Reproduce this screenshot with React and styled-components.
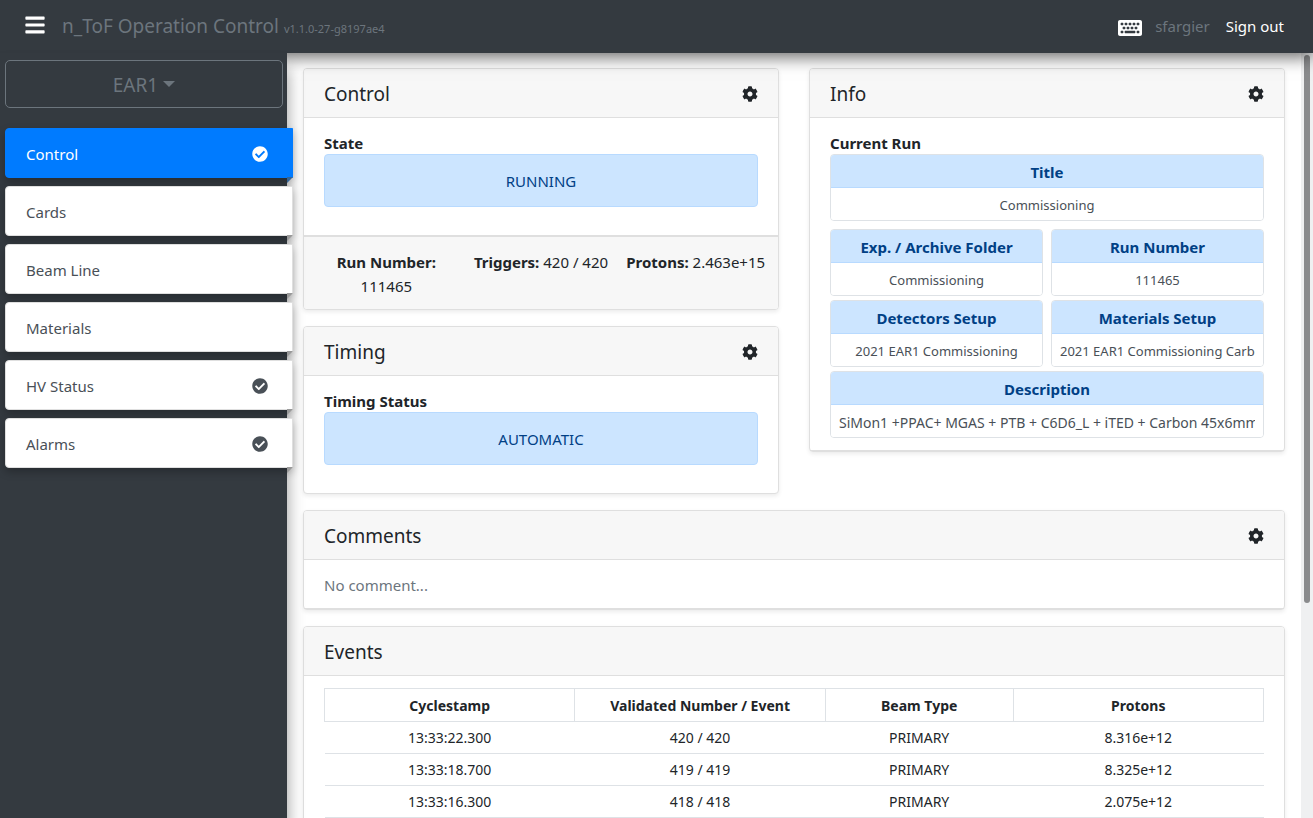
import styled, { createGlobalStyle, css } from "styled-components";
import { FaBars, FaCheckCircle, FaCog, FaKeyboard } from "react-icons/fa";

const GlobalStyle = createGlobalStyle`
  *, *::before, *::after {
    box-sizing: border-box;
  }
  body {
    margin: 0;
    font-family: "Noto Sans", sans-serif;
    font-size: 15px;
    line-height: 24px;
    color: #212529;
    background: #fff;
  }
  button, input {
    font-family: inherit;
  }
`;

const Page = styled.div`
  display: flex;
  flex-direction: column;
  height: 100vh;
  overflow: hidden;
`;

const TopBar = styled.header`
  position: relative;
  z-index: 3;
  flex: none;
  display: flex;
  align-items: center;
  height: 53px;
  padding: 0 29px 0 24px;
  background: #343a40;
  box-shadow: 0 4px 16px rgba(0, 0, 0, 0.6);
`;

const IconButton = styled.button`
  display: flex;
  padding: 0;
  border: 0;
  background: none;
  color: inherit;
  cursor: pointer;
`;

const MenuButton = styled(IconButton)`
  margin-right: 16px;
  padding-bottom: 3px;
  color: #fff;
`;

const Brand = styled.h1`
  flex: 1;
  margin: 0;
  padding-top: 2px;
  font-size: 19px;
  line-height: 30px;
  font-weight: 400;
  color: #6c757d;
`;

const Version = styled.small`
  font-size: 11px;
`;

const UserArea = styled.div`
  display: flex;
  align-items: center;
  padding-bottom: 1px;
  color: #6c757d;
`;

const KeyboardButton = styled(IconButton)`
  margin-right: 13px;
  padding-top: 3px;
  color: #fff;
`;

const SignOut = styled.a`
  margin-left: 16px;
  color: #fff;
  text-decoration: none;
`;

const Body = styled.div`
  flex: 1;
  display: flex;
  min-height: 0;
`;

const Sidebar = styled.aside`
  position: relative;
  z-index: 4;
  flex: none;
  width: 287px;
  padding: 7px 0 0 5px;
  background: #343a40;
  box-shadow: 0 16px 16px rgba(0, 0, 0, 0.4);
`;

const AreaButton = styled.button`
  display: flex;
  align-items: center;
  justify-content: center;
  gap: 5px;
  width: 278px;
  height: 48px;
  margin-bottom: 20px;
  padding: 1px 0 0;
  border: 1px solid #6c757d;
  border-radius: 5px;
  background: none;
  color: #6c757d;
  font-size: 19px;
  line-height: 30px;

  &::after {
    content: "";
    margin-bottom: 2px;
    border: 6px solid transparent;
    border-top-color: #6c757d;
    border-bottom: 0;
  }
`;

const NavList = styled.nav`
  display: flex;
  flex-direction: column;
  gap: 8px;
  margin-right: -6px;
`;

const NavLink = styled.a`
  position: relative;
  display: flex;
  align-items: center;
  justify-content: space-between;
  height: 50px;
  padding: 2px 24px 0 20px;
  border: 1px solid #dfdfdf;
  border-radius: 4px 0 0 4px;
  background: #fff;
  box-shadow: 0 4px 8px rgba(0, 0, 0, 0.25);
  color: #495057;
  text-decoration: none;

  /* folded corner behind the sidebar edge */
  &::after {
    content: "";
    position: absolute;
    top: 100%;
    right: -1px;
    border-top: 6px solid #999;
    border-right: 6px solid transparent;
  }

  ${({ $active }) =>
    $active &&
    css`
      border-color: #007bff;
      background: #007bff;
      color: #fff;

      &::after {
        border-top-color: #336599;
      }
    `}
`;

const Main = styled.main`
  flex: 1;
  min-width: 0;
  display: flex;
  flex-direction: column;
  gap: 16px;
  padding: 15px 16px 16px;
  overflow-y: auto;
  scrollbar-width: none;
`;

const ScrollRail = styled.div`
  flex: none;
  width: 12px;
  padding: 2px 3px;
  background: #eff0f1;
`;

const ScrollThumb = styled.div`
  height: 72%;
  border-radius: 3px;
  background: #8a8b8d;
`;

const Columns = styled.div`
  display: grid;
  grid-template-columns: 1fr 1fr;
  align-items: start;
  gap: 30px;
`;

const Stack = styled.div`
  display: flex;
  flex-direction: column;
  gap: 16px;
`;

const CardBox = styled.section`
  flex: none;
  min-height: ${({ $tall }) => ($tall ? "466px" : "0")};
  border: 1px solid #dfdfdf;
  border-radius: 4px;
  background: #fff;
  box-shadow: 0 2px 4px rgba(0, 0, 0, 0.08);
`;

const CardHeader = styled.header`
  display: flex;
  align-items: center;
  justify-content: space-between;
  height: 49px;
  padding: 2px 20px 0;
  border-bottom: 1px solid #dfdfdf;
  border-radius: 3px 3px 0 0;
  background: #f7f7f7;
`;

const CardTitle = styled.h2`
  margin: 0;
  font-size: 19px;
  line-height: 24px;
  font-weight: 400;
`;

const CardBody = styled.div`
  padding: 12px 20px;
`;

const CardFooter = styled.footer`
  border-top: 1px solid #dfdfdf;
`;

const RunFooter = styled(CardFooter)`
  display: grid;
  grid-template-columns: repeat(3, 1fr);
  padding: 13px 5px 11px;
  border-top-width: 2px;
  border-radius: 0 0 3px 3px;
  background: #f7f7f7;
  text-align: center;
`;

const Figure = styled.div`
  padding: 0 5px;
`;

const SectionLabel = styled.div`
  height: 24px;
  padding-top: 1px;
  font-weight: 700;
`;

const Status = styled.div`
  margin-bottom: 16px;
  padding: 14px 20px 13px;
  border: 1px solid #b8daff;
  border-radius: 4px;
  background: #cce5ff;
  color: #004085;
  text-align: center;
`;

const FieldGrid = styled.div`
  display: grid;
  grid-template-columns: 1fr 1fr;
  gap: 4px 8px;
`;

const FieldBox = styled.div`
  min-width: 0;
  grid-column: ${({ $wide }) => ($wide ? "1 / -1" : "auto")};
  margin-bottom: ${({ $spaced }) => ($spaced ? "4px" : "0")};
  border: 1px solid #dee2e6;
  border-radius: 4px;
  overflow: hidden;
`;

const FieldLabel = styled.label`
  display: block;
  padding: 5px 8px 3px;
  border-bottom: 1px solid #b8daff;
  background: #cce5ff;
  color: #004085;
  font-weight: 700;
  text-align: center;
`;

const FieldInput = styled.input`
  display: block;
  width: 100%;
  height: 32px;
  padding: 2px 8px 0;
  border: 0;
  background: #fff;
  color: #495057;
  font-size: ${({ $long }) => ($long ? "14px" : "13px")};
  text-align: center;
`;

const Muted = styled.p`
  height: 24px;
  margin: 0;
  padding-top: 1px;
  color: #6c757d;
`;

const Table = styled.table`
  width: 100%;
  table-layout: fixed;
  border-collapse: collapse;
  font-size: 14px;
  line-height: 20px;
  text-align: center;

  th {
    height: 33px;
    padding: 1px 4px 0;
    border: 1px solid #dee2e6;
  }
  td {
    height: 32px;
    padding: 1px 4px 0;
    border-bottom: 1px solid #dee2e6;
  }
`;

const Column = styled.col`
  width: ${({ $share }) => $share};
`;

const NAV_ITEMS = [
  { name: "Control", active: true, checked: true },
  { name: "Cards" },
  { name: "Beam Line" },
  { name: "Materials" },
  { name: "HV Status", checked: true },
  { name: "Alarms", checked: true },
];

const RUN_FIELDS = [
  { id: "title", label: "Title", value: "Commissioning", wide: true, spaced: true },
  { id: "folder", label: "Exp. / Archive Folder", value: "Commissioning" },
  { id: "run", label: "Run Number", value: "111465" },
  { id: "detectors", label: "Detectors Setup", value: "2021 EAR1 Commissioning" },
  { id: "materials", label: "Materials Setup", value: "2021 EAR1 Commissioning Carbon" },
  {
    id: "description",
    label: "Description",
    value: "SiMon1 +PPAC+ MGAS + PTB + C6D6_L + iTED + Carbon 45x6mm-",
    wide: true,
    long: true,
  },
];

const EVENTS = [
  ["13:33:22.300", "420 / 420", "PRIMARY", "8.316e+12"],
  ["13:33:18.700", "419 / 419", "PRIMARY", "8.325e+12"],
  ["13:33:16.300", "418 / 418", "PRIMARY", "2.075e+12"],
];

const Card = ({ title, settings, tall, footer, children }) => (
  <CardBox $tall={tall}>
    <CardHeader>
      <CardTitle>{title}</CardTitle>
      {settings && (
        <IconButton type="button" aria-label={`${title} settings`}>
          <FaCog size={16} />
        </IconButton>
      )}
    </CardHeader>
    <CardBody>{children}</CardBody>
    {footer}
  </CardBox>
);

const EventsTable = () => (
  <Table>
    <colgroup>
      <Column $share="calc(100% * 4 / 15)" />
      <Column $share="calc(100% * 4 / 15)" />
      <Column $share="20%" />
      <Column $share="auto" />
    </colgroup>
    <thead>
      <tr>
        <th scope="col">Cyclestamp</th>
        <th scope="col">Validated Number / Event</th>
        <th scope="col">Beam Type</th>
        <th scope="col">Protons</th>
      </tr>
    </thead>
    <tbody>
      {EVENTS.map((row) => (
        <tr key={row[0]}>
          {row.map((cell) => (
            <td key={cell}>{cell}</td>
          ))}
        </tr>
      ))}
    </tbody>
  </Table>
);

export default function App() {
  return (
    <>
      <GlobalStyle />
      <Page>
        <TopBar>
          <MenuButton type="button" aria-label="Toggle menu">
            <FaBars size={22} />
          </MenuButton>
          <Brand>
            n_ToF Operation Control <Version>v1.1.0-27-g8197ae4</Version>
          </Brand>
          <UserArea>
            <KeyboardButton type="button" aria-label="Keyboard shortcuts">
              <FaKeyboard size={24} />
            </KeyboardButton>
            <span>sfargier</span>
            <SignOut href="#logout">Sign out</SignOut>
          </UserArea>
        </TopBar>
        <Body>
          <Sidebar>
            <AreaButton type="button">EAR1</AreaButton>
            <NavList>
              {NAV_ITEMS.map(({ name, active, checked }) => (
                <NavLink key={name} href="#" $active={active}>
                  {name}
                  {checked && <FaCheckCircle size={16} />}
                </NavLink>
              ))}
            </NavList>
          </Sidebar>
          <Main>
            <Columns>
              <Stack>
                <Card
                  title="Control"
                  settings
                  footer={
                    <RunFooter>
                      <Figure><b>Run Number:</b> 111465</Figure>
                      <Figure><b>Triggers:</b> 420 / 420</Figure>
                      <Figure><b>Protons:</b> 2.463e+15</Figure>
                    </RunFooter>
                  }
                >
                  <SectionLabel>State</SectionLabel>
                  <Status>RUNNING</Status>
                </Card>
                <Card title="Timing" settings>
                  <SectionLabel>Timing Status</SectionLabel>
                  <Status>AUTOMATIC</Status>
                </Card>
              </Stack>
              <Card title="Info" settings footer={<CardFooter />}>
                <SectionLabel>Current Run</SectionLabel>
                <FieldGrid>
                  {RUN_FIELDS.map(({ id, label, value, wide, spaced, long }) => (
                    <FieldBox key={id} $wide={wide} $spaced={spaced}>
                      <FieldLabel htmlFor={id}>{label}</FieldLabel>
                      <FieldInput id={id} value={value} $long={long} readOnly />
                    </FieldBox>
                  ))}
                </FieldGrid>
              </Card>
            </Columns>
            <Card title="Comments" settings footer={<CardFooter />}>
              <Muted>No comment...</Muted>
            </Card>
            <Card title="Events" tall>
              <EventsTable />
            </Card>
          </Main>
          <ScrollRail>
            <ScrollThumb />
          </ScrollRail>
        </Body>
      </Page>
    </>
  );
}
